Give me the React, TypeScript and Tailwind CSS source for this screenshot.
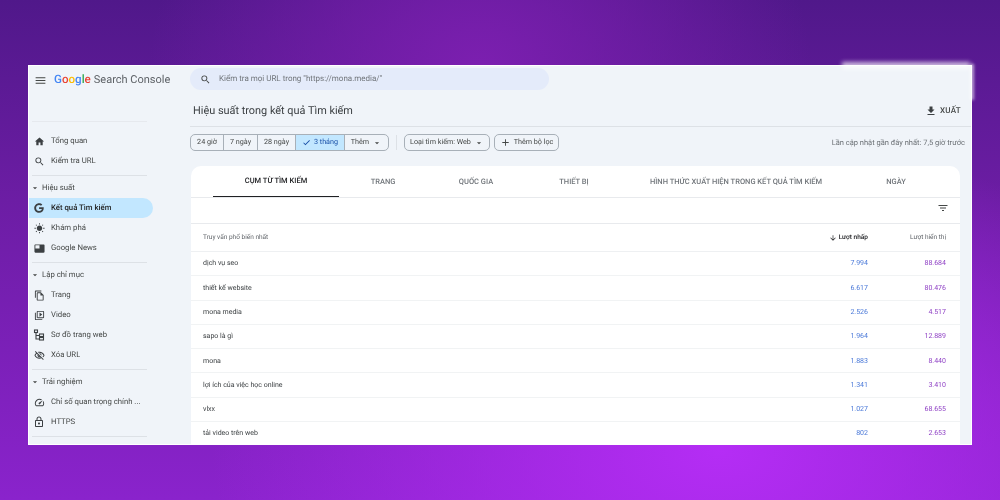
import type { ReactNode } from "react";
import {
  MdMenu, MdSearch, MdHome, MdWbSunny, MdOutlineFileCopy, MdOutlineVideoLibrary, MdOutlineVisibilityOff,
  MdOutlineSpeed, MdOutlineHttps, MdFileDownload, MdFilterList, MdArrowDownward, MdCheck, MdAdd,
  MdArrowDropDown, MdFeaturedVideo,
} from "react-icons/md";
import { FaGoogle } from "react-icons/fa";

const ROWS = [
  ["dịch vụ seo", "7.994", "88.684"],
  ["thiết kế website", "6.617", "80.476"],
  ["mona media", "2.526", "4.517"],
  ["sapo là gì", "1.964", "12.889"],
  ["mona", "1.883", "8.440"],
  ["lợi ích của việc học online", "1.341", "3.410"],
  ["vlxx", "1.027", "68.655"],
  ["tải video trên web", "802", "2.653"],
];

function SitemapIcon() {
  return (
    <svg viewBox="0 0 24 24" className="h-[12px] w-[12px] shrink-0" fill="none" stroke="currentColor" strokeWidth="2.2">
      <rect x="3" y="2" width="6" height="5" />
      <path d="M6 7v13h6M6 13h6" />
      <rect x="13" y="10" width="8" height="5" />
      <rect x="13" y="17" width="8" height="5" />
    </svg>
  );
}

function NavItem({ icon, label, active }: { icon: ReactNode; label: string; active?: boolean }) {
  return (
    <div className={`flex h-[20px] w-[124px] items-center rounded-r-full pl-[5px] ${active ? "bg-[#c2e7ff] font-medium text-[#1f1f1f]" : "text-[#444746]"}`}>
      <span className="mr-[7px] flex w-[10px] justify-center text-[#3c4043]">{icon}</span>
      <span className="truncate text-[7.75px]">{label}</span>
    </div>
  );
}

function Section({ label }: { label: string }) {
  return (
    <div className="flex h-[20px] items-center pl-[1px] text-[7.75px] text-[#444746]">
      <MdArrowDropDown className="h-[10px] w-[10px]" />
      <span className="ml-[2px]">{label}</span>
    </div>
  );
}

function Divider() {
  return <div className="my-[4px] ml-[3px] h-px w-[115px] bg-[#dde1e6]" />;
}

function Sidebar() {
  return (
    <div className="w-[161px] shrink-0">
      <div className="flex h-[29px] items-center pb-[1px] pl-[5px]">
        <MdMenu className="h-[13px] w-[13px] text-[#444746]" />
        <span className="ml-[7px] whitespace-nowrap text-[11px]">
          <span className="text-[11.6px] font-medium text-[#4285f4]">G</span>
          <span className="text-[11.6px] font-medium text-[#ea4335]">o</span>
          <span className="text-[11.6px] font-medium text-[#fbbc05]">o</span>
          <span className="text-[11.6px] font-medium text-[#4285f4]">g</span>
          <span className="text-[11.6px] font-medium text-[#34a853]">l</span>
          <span className="text-[11.6px] font-medium text-[#ea4335]">e</span>
          <span className="ml-[3px] text-[#5f6368]">Search Console</span>
        </span>
      </div>
      <div className="ml-[3px] mt-[26px] h-px w-[115px] bg-[#e6e9ee]" />
      <div className="mt-[9px]">
        <NavItem icon={<MdHome className="h-[11px] w-[11px] shrink-0" />} label="Tổng quan" />
        <NavItem icon={<MdSearch className="h-[11px] w-[11px] shrink-0" />} label="Kiểm tra URL" />
      </div>
      <Divider />
      <div className="-mt-[2px]">
        <Section label="Hiệu suất" />
        <NavItem active icon={<FaGoogle className="h-[10px] w-[10px] shrink-0" />} label="Kết quả Tìm kiếm" />
        <NavItem icon={<MdWbSunny className="h-[11px] w-[11px] shrink-0" />} label="Khám phá" />
        <NavItem icon={<MdFeaturedVideo className="h-[11px] w-[11px] shrink-0" />} label="Google News" />
      </div>
      <Divider />
      <div className="-mt-[2px]">
        <Section label="Lập chỉ mục" />
        <NavItem icon={<MdOutlineFileCopy className="h-[11px] w-[11px] shrink-0" />} label="Trang" />
        <NavItem icon={<MdOutlineVideoLibrary className="h-[11px] w-[11px] shrink-0" />} label="Video" />
        <NavItem icon={<SitemapIcon />} label="Sơ đồ trang web" />
        <NavItem icon={<MdOutlineVisibilityOff className="h-[11px] w-[11px] shrink-0" />} label="Xóa URL" />
      </div>
      <Divider />
      <div className="-mt-[2px]">
        <Section label="Trải nghiệm" />
        <NavItem icon={<MdOutlineSpeed className="h-[11px] w-[11px] shrink-0" />} label="Chỉ số quan trọng chính ..." />
        <NavItem icon={<MdOutlineHttps className="h-[12px] w-[12px] shrink-0" />} label="HTTPS" />
      </div>
      <Divider />
    </div>
  );
}

function RangeBtn({ children, w, active }: { children: ReactNode; w: string; active?: boolean }) {
  return (
    <div className={`flex h-full items-center justify-center border-r border-[#a8b0b8] last:border-r-0 ${w} ${active ? "bg-[#c2e7ff] text-[#174ea6]" : ""}`}>
      {children}
    </div>
  );
}

function Filters() {
  return (
    <div className="mt-[7px] flex h-[17px] items-center text-[7.2px] text-[#444746]">
      <div className="flex h-full items-center overflow-hidden rounded-[5px] border border-[#a8b0b8]">
        <RangeBtn w="w-[33px]">24 giờ</RangeBtn>
        <RangeBtn w="w-[34px]">7 ngày</RangeBtn>
        <RangeBtn w="w-[38px]">28 ngày</RangeBtn>
        <RangeBtn w="w-[49px]" active>
          <MdCheck className="mr-[3px] h-[9px] w-[9px]" />3 tháng
        </RangeBtn>
        <RangeBtn w="w-[43px]">
          Thêm <MdArrowDropDown className="ml-[3px] h-[10px] w-[10px]" />
        </RangeBtn>
      </div>
      <div className="ml-[7px] h-[15px] w-px bg-[#dde1e6]" />
      <div className="ml-[7px] flex h-full w-[86px] items-center justify-center rounded-[5px] border border-[#a8b0b8]">
        Loại tìm kiếm: Web <MdArrowDropDown className="ml-[3px] h-[10px] w-[10px]" />
      </div>
      <div className="ml-[4px] flex h-full w-[65px] items-center justify-center rounded-[5px] border border-[#a8b0b8]">
        <MdAdd className="mr-[3px] h-[11px] w-[11px]" />Thêm bộ lọc
      </div>
      <span className="ml-auto pr-[6px] text-[7.5px] text-[#6b7075]">Lần cập nhật gần đây nhất: 7,5 giờ trước</span>
    </div>
  );
}

function Tab({ label, w, active }: { label: string; w: string; active?: boolean }) {
  return (
    <div className={`flex h-[31px] items-center justify-center ${w} text-[7.5px] font-medium ${active ? "border-b-[1.5px] border-[#202124] text-[#202124]" : "text-[#70757a]"}`}>
      {label}
    </div>
  );
}

function ResultsCard() {
  return (
    <div className="ml-[1px] mt-[15px] w-[769px] rounded-t-[10px] bg-white">
      <div className="flex border-b border-[#e8eaed] pl-[22px]">
        <Tab active label="CỤM TỪ TÌM KIẾM" w="w-[126px]" />
        <Tab label="TRANG" w="w-[88px]" />
        <Tab label="QUỐC GIA" w="w-[98px]" />
        <Tab label="THIẾT BỊ" w="w-[98px]" />
        <Tab label="HÌNH THỨC XUẤT HIỆN TRONG KẾT QUẢ TÌM KIẾM" w="w-[226px]" />
        <Tab label="NGÀY" w="w-[94px]" />
      </div>
      <div className="flex h-[26px] items-center justify-end border-b border-[#e8eaed] pb-[5px] pr-[11px]">
        <MdFilterList className="h-[12px] w-[12px] text-[#444746]" />
      </div>
      <div className="flex h-[28px] items-center border-b border-[#eef0f2] pl-[12px] pr-[14px] text-[6.5px] text-[#5f6368]">
        <span className="flex-1">Truy vấn phổ biến nhất</span>
        <span className="flex w-[80px] items-center justify-end font-medium text-[#202124]">
          <MdArrowDownward className="mr-[2px] h-[8px] w-[8px]" />Lượt nhấp
        </span>
        <span className="w-[78px] text-right">Lượt hiển thị</span>
      </div>
      {ROWS.map(([query, clicks, impressions]) => (
        <div key={query} className="flex h-[24.3px] items-center border-b-[1.5px] border-[#f1f3f4] pl-[12px] pr-[14px] text-[7px]">
          <span className="flex-1 text-[#3c4043]">{query}</span>
          <span className="w-[80px] text-right text-[#4978d8]">{clicks}</span>
          <span className="w-[78px] text-right text-[#8e3fc4]">{impressions}</span>
        </div>
      ))}
    </div>
  );
}

export default function App() {
  return (
    <div className="relative h-[500px] w-[1000px] overflow-hidden bg-[radial-gradient(ellipse_at_72%_90%,#b52df5_0%,transparent_50%),radial-gradient(ellipse_at_48%_14%,#7c1fb0_0%,transparent_45%),linear-gradient(to_bottom,#50188a_0%,#6c1da4_40%,#8a23cc_100%)] pl-[28px] pt-[65px] font-['Roboto',sans-serif] [text-rendering:geometricPrecision]">
      <div className="flex h-[380px] w-[944px] overflow-hidden border border-white bg-[#f0f4f9] blur-[0.3px]">
        <Sidebar />
        <div className="min-w-0 flex-1">
          <div className="flex h-[29px] items-start pt-[2px]">
            <div className="flex h-[22px] w-[359px] items-center rounded-full bg-[#e4ebfa] pl-[10px] text-[8px] text-[#70757a]">
              <MdSearch className="h-[11px] w-[11px] text-[#444746]" />
              <span className="ml-[8px]">Kiểm tra mọi URL trong "https://mona.media/"</span>
            </div>
          </div>
          <div className="flex h-[32px] items-center justify-between border-b border-[#dde1e6] pl-[3px] pr-[10px] pt-[1px]">
            <span className="text-[10.9px] text-[#3c4043]">Hiệu suất trong kết quả Tìm kiếm</span>
            <span className="flex items-center text-[8px] font-medium tracking-[0.3px] text-[#444746]">
              <MdFileDownload className="mr-[3px] h-[12px] w-[12px] text-[#3c4043]" />XUẤT
            </span>
          </div>
          <Filters />
          <ResultsCard />
        </div>
      </div>
      <div className="absolute left-[842px] top-[62px] h-[7px] w-[128px] bg-white/70 blur-[2px]" />
      <div className="absolute left-[970px] top-[64px] h-[36px] w-[4px] bg-white/60 blur-[1.5px]" />
    </div>
  );
}
